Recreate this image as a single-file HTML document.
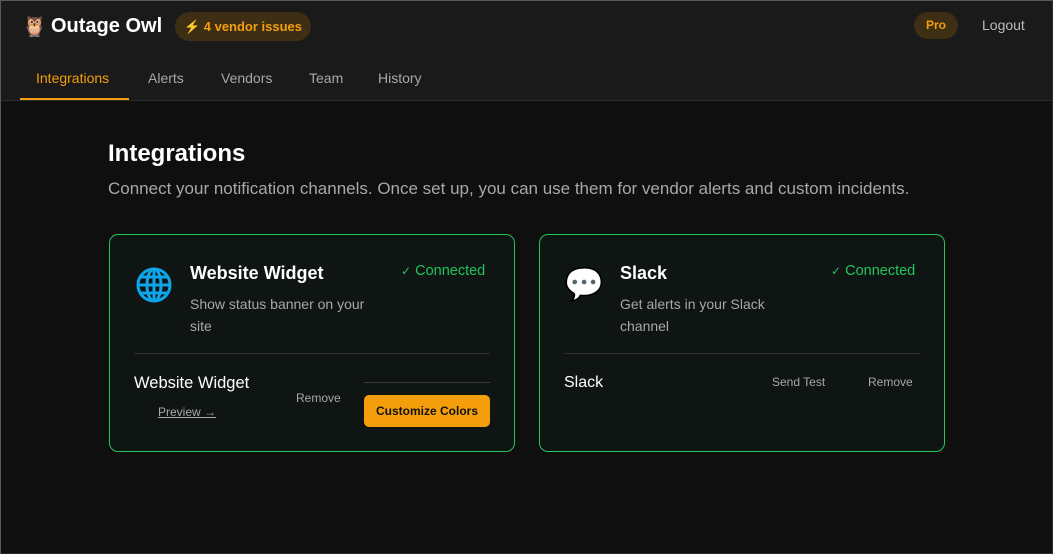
<!DOCTYPE html>
<html><head><style>
*{box-sizing:border-box;margin:0;padding:0}
html,body{width:1053px;height:554px;overflow:hidden;background:#0f0f0f;font-family:"Liberation Sans","Noto Sans CJK JP",sans-serif}
.frame{position:absolute;left:0;top:0;width:1053px;height:554px;border:1px solid #5a5a5a;border-right-color:#2a2a2a;border-bottom-color:#2a2a2a}
.top{position:absolute;left:1px;top:1px;width:1051px;height:100px;background:#1a1a1a;border-bottom:1px solid #2c2c2c}
.abs{position:absolute;white-space:nowrap}
.card{position:absolute;top:234px;width:406px;height:218px;border:1px solid #22c55e;border-radius:9px;background:#0f1512}
.hr{position:absolute;height:1px;background:#2b302d}
.ck{font-family:"DejaVu Sans",sans-serif;font-size:12px}
</style></head><body>
<div class="frame"></div>
<div class="top">
 <div class="abs" style="left:21px;top:13px;font-size:20px">🦉</div>
 <div class="abs" style="left:50px;top:14px;font-size:20px;font-weight:bold;color:#fff">Outage Owl</div>
 <div class="abs" style="left:174px;top:11px;width:136px;height:29px;border-radius:15px;background:#3d2e14;color:#f59e0b;font-size:13px;font-weight:bold;line-height:29px;text-align:center">⚡ 4 vendor issues</div>
 <div class="abs" style="left:913px;top:11px;width:44px;height:27px;border-radius:14px;background:#3d2e14;color:#f59e0b;font-size:12px;font-weight:bold;line-height:27px;text-align:center">Pro</div>
 <div class="abs" style="left:981px;top:16px;color:#bbb;font-size:14px">Logout</div>
 <div class="abs" style="left:35px;top:69px;color:#f59e0b;font-size:14px">Integrations</div>
 <div class="abs" style="left:147px;top:69px;color:#a8a8a8;font-size:14px">Alerts</div>
 <div class="abs" style="left:220px;top:69px;color:#a8a8a8;font-size:14px">Vendors</div>
 <div class="abs" style="left:308px;top:69px;color:#a8a8a8;font-size:14px">Team</div>
 <div class="abs" style="left:377px;top:69px;color:#a8a8a8;font-size:14px">History</div>
 <div class="abs" style="left:19px;top:97px;width:109px;height:2px;background:#f59e0b"></div>
</div>
<div class="abs" style="left:108px;top:140px;color:#fff;font-size:24px;font-weight:bold">Integrations</div>
<div class="abs" style="left:108px;top:179px;color:#a8a8a8;font-size:17px">Connect your notification channels. Once set up, you can use them for vendor alerts and custom incidents.</div>

<div class="card" style="left:109px">
 <svg class="abs" style="left:25px;top:31px" width="38" height="38" viewBox="0 0 38 38"><g fill="none" stroke="#0ea5e9" stroke-width="3"><circle cx="19" cy="19" r="16"/><ellipse cx="19" cy="19" rx="7" ry="16"/><line x1="19" y1="3" x2="19" y2="35"/><line x1="3" y1="19" x2="35" y2="19"/><line x1="6" y1="11" x2="32" y2="11"/><line x1="6" y1="27" x2="32" y2="27"/></g></svg>
 <div class="abs" style="left:80px;top:28px;color:#fff;font-size:18px;font-weight:bold">Website Widget</div>
 <div class="abs" style="left:80px;top:58px;color:#a8a8a8;font-size:14px;line-height:22px;white-space:normal;width:195px">Show status banner on your site</div>
 <div class="abs" style="left:291px;top:28px;color:#22c55e;font-size:14.5px"><span class="ck">✓</span> Connected</div>
 <div class="hr" style="left:24px;top:118px;width:356px"></div>
 <div class="abs" style="left:24px;top:139px;color:#fff;font-size:16.5px">Website Widget</div>
 <div class="abs" style="left:48px;top:170px;color:#a8a8a8;font-size:12px;text-decoration:underline">Preview →</div>
 <div class="abs" style="left:186px;top:156px;color:#a8a8a8;font-size:12px">Remove</div>
 <div class="hr" style="left:254px;top:147px;width:126px;background:#3a3a3a"></div>
 <div class="abs" style="left:254px;top:160px;width:126px;height:32px;border-radius:5px;background:#f59e0b;color:#111;font-size:12px;font-weight:bold;line-height:32px;text-align:center">Customize Colors</div>
</div>

<div class="card" style="left:539px">
 <div class="abs" style="left:24px;top:30px;font-size:32px;line-height:38px;color:#fff">💬</div>
 <div class="abs" style="left:80px;top:28px;color:#fff;font-size:18px;font-weight:bold">Slack</div>
 <div class="abs" style="left:80px;top:58px;color:#a8a8a8;font-size:14px;line-height:22px;white-space:normal;width:175px">Get alerts in your Slack channel</div>
 <div class="abs" style="left:291px;top:28px;color:#22c55e;font-size:14.5px"><span class="ck">✓</span> Connected</div>
 <div class="hr" style="left:24px;top:118px;width:356px"></div>
 <div class="abs" style="left:24px;top:139px;color:#fff;font-size:16px">Slack</div>
 <div class="abs" style="left:232px;top:140px;color:#a8a8a8;font-size:12px">Send Test</div>
 <div class="abs" style="left:328px;top:140px;color:#a8a8a8;font-size:12px">Remove</div>
</div>
</body></html>
